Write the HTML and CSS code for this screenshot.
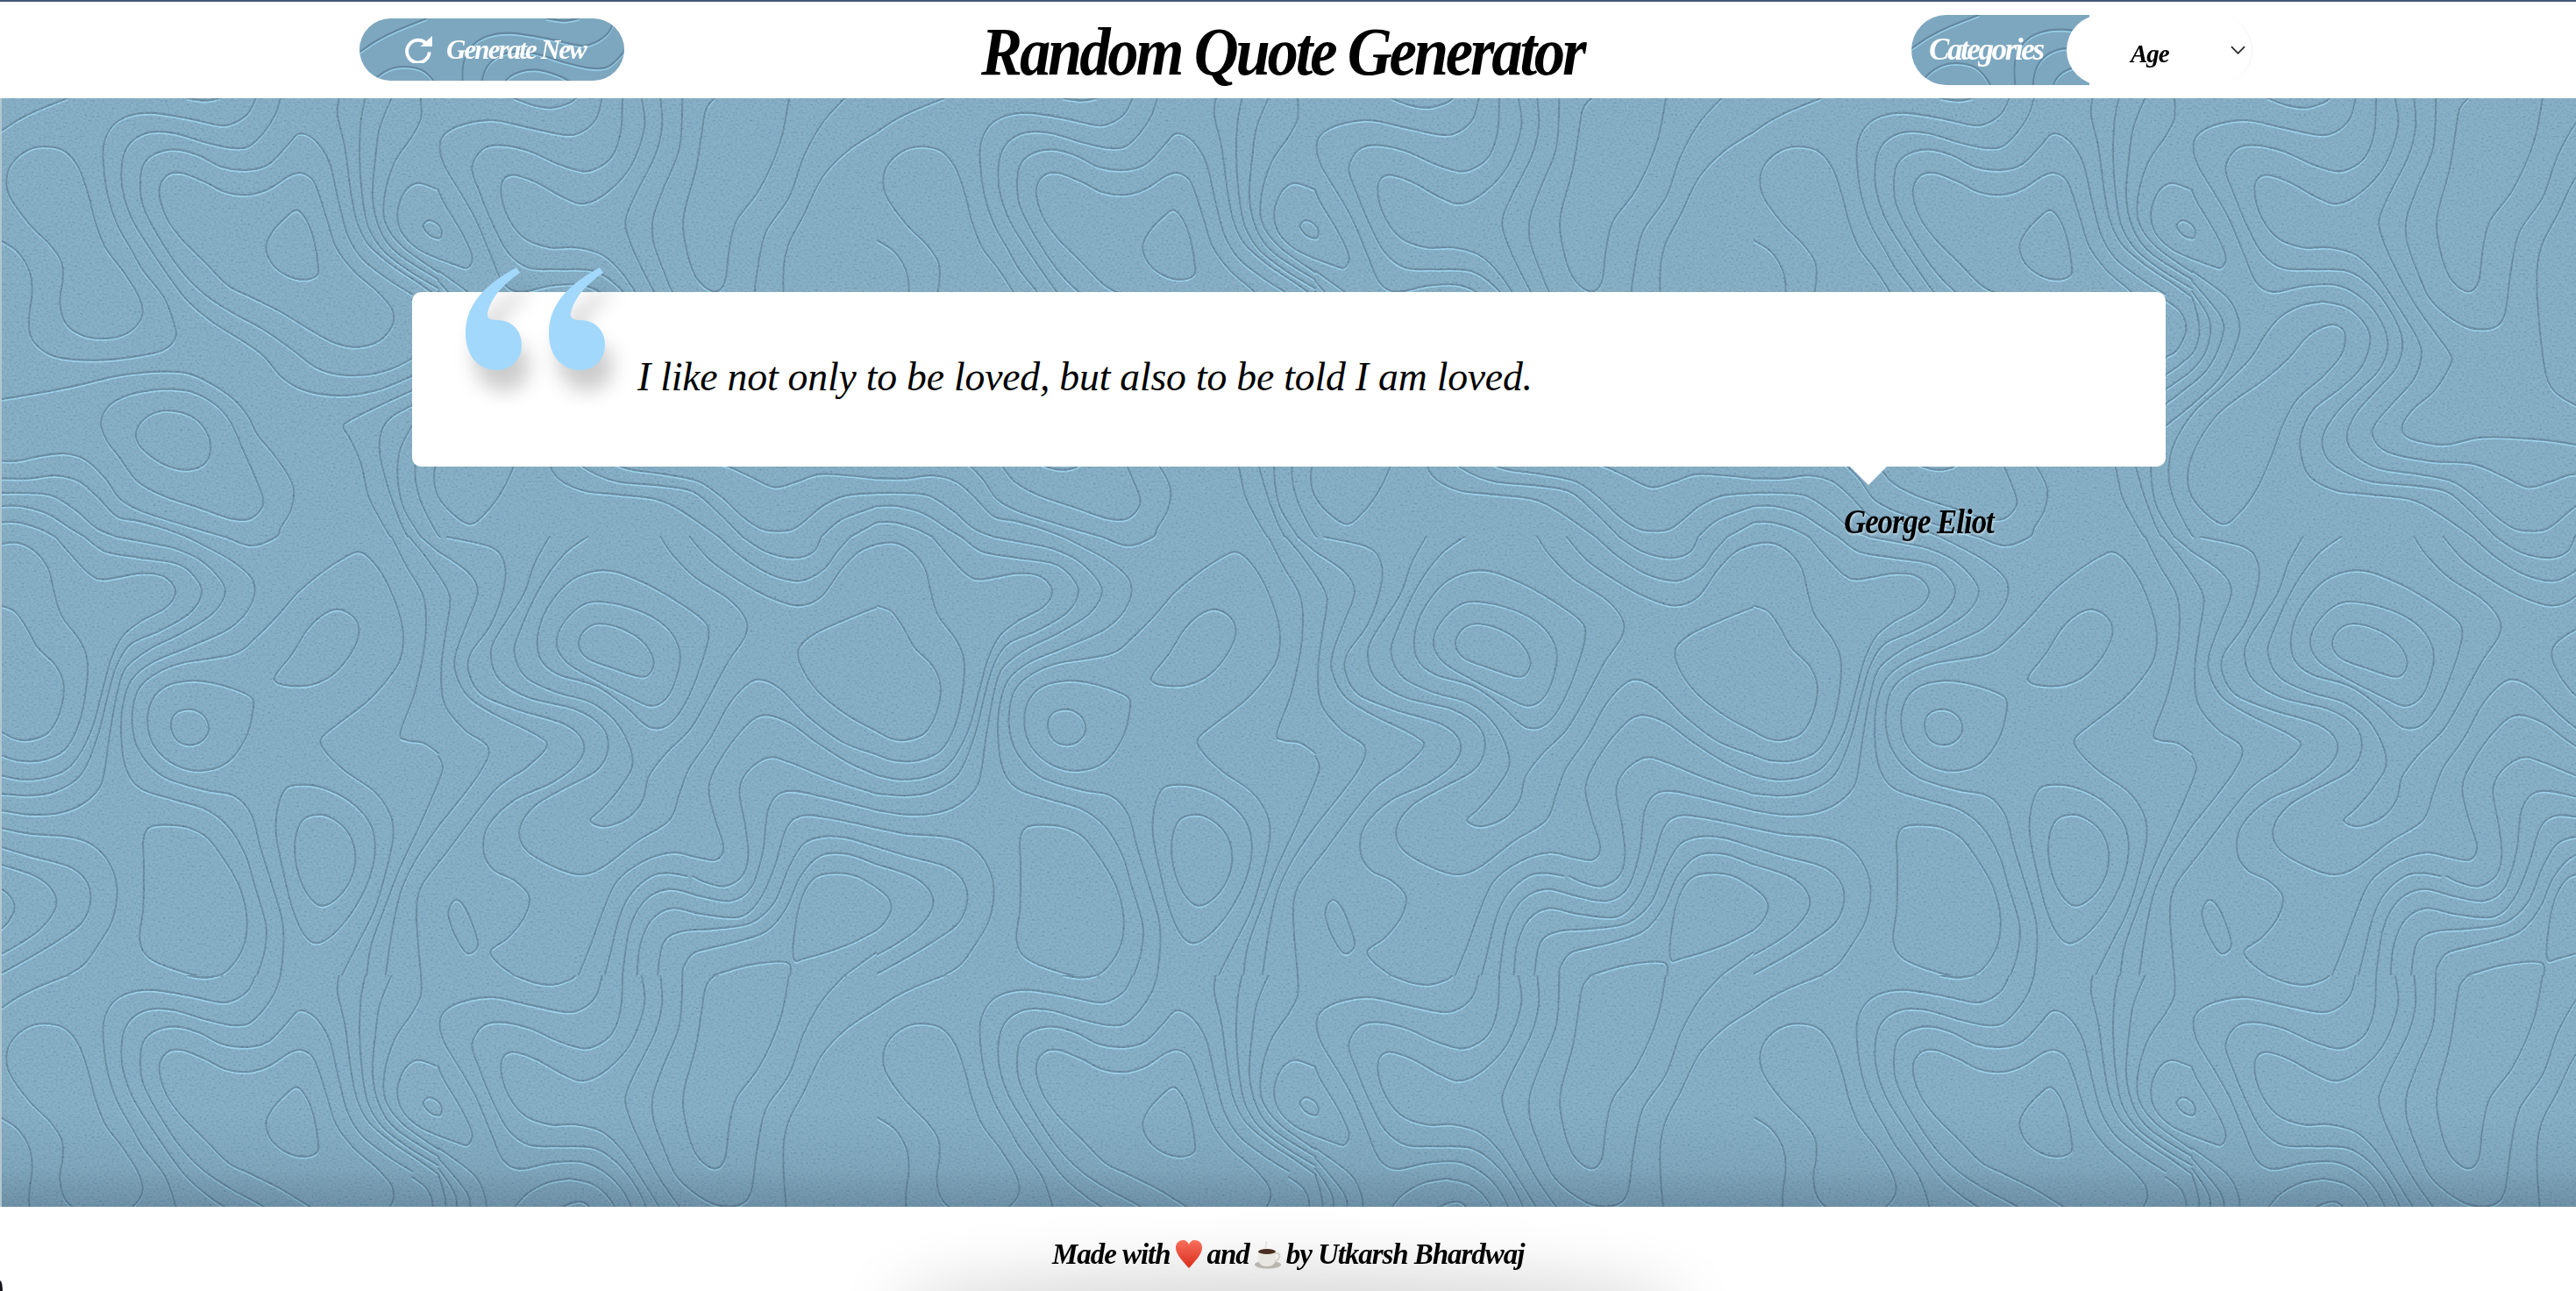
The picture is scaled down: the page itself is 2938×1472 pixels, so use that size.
FILE: index.html
```html
<!DOCTYPE html>
<html lang="en">
<head>
<meta charset="utf-8">
<title>Random Quote Generator</title>
<link rel="stylesheet" href="styles.css">
</head>
<body>
<header class="top">
  <div class="top-left">
    <button class="pill generate" type="button">
      <svg class="tex" aria-hidden="true"><rect width="100%" height="100%" fill="url(#paper)"/></svg>
      <svg class="redo" viewBox="0 0 34 32" aria-hidden="true"><path d="M25.5 8.5A13.2 13.2 0 1 0 29.6 19" fill="none" stroke="#fff" stroke-width="4"/><polygon points="19,12.5 33,12.5 33,0" fill="#fff"/></svg>
      <span class="pill-label">Generate New</span>
    </button>
  </div>
  <h1 class="title"><span class="title-text">Random Quote Generator</span></h1>
  <div class="top-right">
    <div class="pill categories">
      <svg class="tex" aria-hidden="true"><rect width="100%" height="100%" fill="url(#paper)"/></svg>
      <span class="cat-label">Categories</span>
    </div>
    <div class="select">
      <span class="select-value">Age</span>
      <svg class="chev" viewBox="0 0 18 10" aria-hidden="true"><polyline points="1,1 9,9 17,1" fill="none" stroke="#222" stroke-width="1.8"/></svg>
    </div>
  </div>
</header>

<main class="stage">
  <svg class="backdrop" aria-hidden="true">
    <defs>
      <filter id="soft" x="0" y="0" width="100%" height="100%"><feGaussianBlur stdDeviation="2.2"/></filter>
      <filter id="grain" x="0" y="0" width="100%" height="100%">
        <feTurbulence type="fractalNoise" baseFrequency="0.36 0.44" numOctaves="3" seed="7"/>
        <feColorMatrix type="matrix" values="1.6 0 0 0 -0.3  1.6 0 0 0 -0.3  1.6 0 0 0 -0.3  0 0 0 0 1"/>
      </filter>
      <pattern id="paper" patternUnits="userSpaceOnUse" width="1000" height="1000">
        <rect width="1000" height="1000" fill="#7da7bf"/>
        <g transform="scale(0.33333)" filter="url(#soft)">
          <path id="shine" class="line-shine" transform="translate(0 6)" d=""/>
          <path id="groove" class="line-groove" d=""/>
        </g>
      </pattern>
    </defs>
    <rect width="100%" height="100%" fill="url(#paper)"/>
    <rect class="grain" width="100%" height="100%" filter="url(#grain)"/>
  </svg>

  <section class="card">
    <svg class="mark" viewBox="0 0 160 118" aria-hidden="true">
      <path d="M58 0L62 6C45 18 30 32 25 52C24 58 28 60 36 60C53 60 64 72 64 88C64 105 52 117 36 117C14 117 0 100 0 75C0 40 25 18 58 0Z"/>
      <path d="M153 0L157 6C140 18 125 32 120 52C119 58 123 60 131 60C148 60 159 72 159 88C159 105 147 117 131 117C109 117 95 100 95 75C95 40 120 18 153 0Z"/>
    </svg>
    <p class="quote">I like not only to be loved, but also to be told I am loved.</p>
  </section>
  <p class="author"><span class="author-name">George Eliot</span></p>
</main>

<footer class="bottom">
  <p class="credit">Made with<svg class="emoji" viewBox="0 0 32 34" role="img" aria-label="heart"><defs><linearGradient id="heartfill" x1="0" y1="0" x2="0" y2="1"><stop offset="0" stop-color="#f8705c"/><stop offset="1" stop-color="#d92c1c"/></linearGradient></defs><path d="M16 33C8 24 1 17 1 9.500C1 4 5 1 9.500 1C12.500 1 15 3 16 6C17 3 19.500 1 22.500 1C27 1 31 4 31 9.500C31 17 24 24 16 33Z" fill="url(#heartfill)"/></svg>and<svg class="emoji" viewBox="0 0 32 34" role="img" aria-label="coffee"><ellipse cx="16" cy="29" rx="15" ry="4.500" fill="#b9b6ae"/><path d="M5 14H25V22C25 28 21 31 15 31C9 31 5 28 5 22Z" fill="#e9e7e1"/><path d="M25 16C31 15 31 23 24 25" fill="none" stroke="#d6d3cb" stroke-width="2"/><ellipse cx="15" cy="14" rx="10" ry="3" fill="#4a2e20"/><path d="M14 10C12 7 16 6 14 2" fill="none" stroke="#ddd" stroke-width="1.500"/></svg>by Utkarsh Bhardwaj</p>
</footer>
<script src="script.js"></script>
</body>
</html>
```

FILE: styles.css
```css
* { box-sizing: border-box; }
html, body { margin: 0; padding: 0; }
body {
  width: 100%;
  height: 100vh;
  display: flex;
  flex-direction: column;
  overflow: hidden;
  background: #fff;
  color: #000;
  font-family: "Liberation Serif", serif;
}

.top {
  flex: 0 0 112px;
  display: grid;
  grid-template-columns: 1119px 692px 1fr;
  align-items: start;
  border-top: 2px solid #44587a;
  background: #fff;
}
.top-left { padding: 19px 0 0 410px; }
.top-right { display: flex; padding: 15px 0 0 369px; }

.pill {
  position: relative;
  overflow: hidden;
  border: 0;
  padding: 0;
  color: #fff;
  font-family: "Liberation Serif", serif;
  font-weight: 700;
  font-style: italic;
}
.tex { position: absolute; inset: 0; width: 100%; height: 100%; }

.generate {
  width: 302px;
  height: 71px;
  display: flex;
  align-items: center;
  gap: 15px;
  padding-left: 51px;
  border-radius: 36px;
}
.redo { position: relative; width: 33px; height: 31px; flex: none; }
.pill-label {
  position: relative;
  font-size: 31px;
  letter-spacing: -1.9px;
  white-space: nowrap;
}

.title { margin: 0; padding-top: 15px; font-size: 79px; line-height: 84px; font-weight: 700; font-style: italic; }
.title-text {
  display: inline-block;
  white-space: nowrap;
  letter-spacing: -3.6px;
  transform: scaleX(.895);
  transform-origin: left center;
}

.categories {
  width: 203px;
  height: 80px;
  display: flex;
  align-items: center;
  padding-left: 20px;
  border-radius: 40px 0 0 40px;
}
.cat-label { position: relative; font-size: 35px; letter-spacing: -2.4px; }

.select {
  position: relative;
  width: 212px;
  height: 80px;
  margin-left: -26px;
  display: flex;
  align-items: center;
  padding-left: 73px;
  background: #fff;
  border-radius: 40px;
  border-right: 1px solid #f1f1f1;
}
.select-value { font-size: 29px; font-weight: 700; font-style: italic; letter-spacing: -1px; padding-top: 9px; }
.chev { position: absolute; left: 187px; top: 35px; width: 17px; height: 10px; }

.stage {
  position: relative;
  flex: 1 1 auto;
  overflow: hidden;
  padding-top: 221px;
}
.stage::before {
  content: "";
  position: absolute;
  left: 0; top: 0; bottom: 0;
  width: 2px;
  background: #b3c5d0;
  z-index: 1;
}
.stage::after {
  content: "";
  position: absolute;
  left: 0; right: 0; bottom: 0;
  height: 110px;
  background: linear-gradient(to bottom, rgba(30,50,70,0), rgba(30,50,70,.07) 60%, rgba(30,50,70,.24));
}
.backdrop { position: absolute; inset: 0; width: 100%; height: 100%; }
.grain { mix-blend-mode: soft-light; opacity: .3; }
.line-groove { fill: none; stroke: #63879e; stroke-width: 6.5; stroke-linecap: round; stroke-linejoin: round; }
.line-shine { fill: none; stroke: #98cfe9; stroke-width: 5; stroke-linecap: round; stroke-linejoin: round; }

.card {
  position: relative;
  width: 2000px;
  height: 199px;
  margin-left: 470px;
  display: flex;
  align-items: center;
  padding-left: 257px;
  background: #fff;
  border-radius: 10px;
}
.card::after {
  content: "";
  position: absolute;
  left: 1640px;
  top: 199px;
  border-style: solid;
  border-width: 21px 21px 0;
  border-color: #fff transparent transparent;
}
.mark {
  position: absolute;
  left: 61px;
  top: -28px;
  width: 160px;
  height: 118px;
  fill: #a2d8fb;
  overflow: visible;
  filter: drop-shadow(9px 24px 11px rgba(0,0,0,.2));
}
.quote {
  margin: 0 0 6px;
  font-size: 45.7px;
  font-style: italic;
  letter-spacing: -.2px;
  white-space: nowrap;
  color: #000;
}

.author {
  position: relative;
  margin: 37px 0 0 2103px;
  font-size: 41px;
  line-height: 50px;
  font-weight: 700;
  font-style: italic;
  letter-spacing: -1.2px;
  white-space: nowrap;
  text-shadow: 1px 2px 3px rgba(215,232,242,.8);
}
.author-name { display: inline-block; transform: scaleX(.85); transform-origin: left center; }

.bottom {
  position: relative;
  flex: 0 0 96px;
  overflow: hidden;
  background: #fff;
}
.bottom::before {
  content: "";
  position: absolute;
  left: 1040px;
  right: 1040px;
  bottom: -42px;
  height: 40px;
  border-radius: 50%;
  box-shadow: 0 0 70px 28px rgba(0,0,0,.15);
}
.bottom::after {
  content: "";
  position: absolute;
  left: 0;
  bottom: 0;
  width: 3px;
  height: 12px;
  background: #16161c;
  border-top-right-radius: 3px 12px;
}
.credit {
  position: relative;
  margin: 0;
  padding-top: 37px;
  padding-left: 1200px;
  display: flex;
  align-items: center;
  font-size: 33px;
  line-height: 34px;
  font-weight: 700;
  font-style: italic;
  letter-spacing: -1.05px;
  white-space: nowrap;
}
.emoji { width: 32px; height: 34px; flex: none; margin: 0 5px; }
```

FILE: script.js
```js
// Contour lines of the paper backdrop: lists of points, smoothed into curves.
// Each group has an offset; points are in units of a third of a pixel.
var groups = [
  { at: [0, 0], open: [
    "0,115 60,75 130,40 230,0",
    "640,0 700,8 750,0",
    "875,0 850,50 800,85 750,92 650,70 520,50 440,60 385,95 355,160 355,240 370,340 400,430 450,520 490,590 560,680 595,770 600,820 560,860 480,880 350,895 220,890 150,865 105,815 100,750 110,660 100,590 60,525 0,485",
    "960,0 940,60 900,120 850,165 790,170 700,150 600,120 520,115 460,140 425,190 415,270 425,340 460,430 530,540 630,680 720,760 830,830 900,880 960,950 1020,990 1100,1012 1200,1015 1300,995 1410,950",
    "1410,670 1330,620 1240,550 1190,470 1160,360 1130,230 1100,170 1060,130 1020,122 980,165 920,225 850,245 760,235 680,195 600,175 530,190 490,230 480,300 490,370 540,470 620,590 700,670 790,730 900,790 1000,860 1080,920 1160,945 1260,945 1340,925 1410,890",
    "1160,0 1155,60 1180,170 1200,320 1220,420 1260,500 1340,570 1430,630 1500,680",
    "1250,0 1235,80 1230,200 1240,340 1260,440 1310,520 1400,590 1500,650",
    "1340,0 1300,100 1285,200 1275,340 1300,450 1360,530 1500,620",
    "1440,0 1440,70 1410,130 1350,220 1315,340 1320,430 1380,510 1500,595",
    "1500,312 1430,290 1385,320 1360,390 1375,460 1430,515 1500,548",
    "0,1030 120,1010 250,985 400,950 530,935 640,940 720,975 800,1030 850,1090 880,1150 930,1210 980,1280 1005,1340 995,1410 960,1470 945,1500 860,1530 770,1500 700,1480 600,1450 480,1410 410,1370 360,1300 290,1235 220,1215 130,1225 60,1240 0,1240",
    "0,1300 100,1300 190,1290 270,1310 330,1360 400,1430 470,1445 560,1470 640,1500",
    "0,1350 100,1350 180,1360 260,1410 330,1470 400,1500",
    "0,1395 70,1395 160,1420 240,1470 290,1500",
    "0,1450 60,1450 130,1470 190,1500",
    "1410,1000 1300,1050 1200,1100 1175,1125 1200,1170 1235,1250 1260,1360 1300,1440 1335,1500",
    "1410,1050 1340,1090 1305,1140 1300,1220 1330,1340 1370,1450 1395,1500"
  ], closed: [
    "150,165 90,180 40,225 22,280 35,340 100,430 170,500 210,560 215,620 205,700 225,770 280,810 350,822 420,810 470,775 488,730 470,670 420,590 360,510 325,420 305,340 270,240 220,180",
    "545,320 570,265 620,255 700,285 770,320 850,330 920,310 990,265 1030,255 1070,280 1095,340 1120,420 1150,510 1210,590 1290,660 1340,720 1345,770 1310,820 1260,845 1200,850 1130,830 1050,785 960,730 860,680 780,640 700,560 620,480 570,410",
    "1015,382 975,410 930,460 910,510 930,565 980,605 1040,620 1085,605 1088,570 1075,490 1050,420",
    "1465,418 1448,438 1470,468 1505,478 1510,450 1490,425",
    "520,998 440,1015 375,1050 345,1110 365,1170 410,1230 470,1310 560,1360 680,1400 780,1435 850,1440 890,1410 900,1370 870,1290 830,1200 790,1110 740,1050 660,1005 590,995",
    "570,1068 510,1085 470,1130 470,1175 510,1220 580,1260 650,1270 705,1245 720,1190 700,1130 650,1085"
  ]},
  { at: [1410, 0], open: [
    "350,0 420,25 480,32 540,15 560,0",
    "650,0 630,70 580,115 520,125 400,100 280,75 190,85 120,115 95,160 110,230 170,330 220,420 270,540 310,630 370,662 480,640 590,640 680,690 740,770 760,850 730,930 660,1000 590,1070 540,1150 545,1220 600,1270 700,1310 850,1325 960,1345 1040,1410 1130,1500",
    "720,0 715,110 690,190 650,230 590,250 500,225 400,180 300,160 240,175 205,240 230,320 280,440 330,530 400,580 500,585 620,590 700,640 770,730 810,830 790,920 720,1000 650,1080 620,1160 650,1220 730,1265 860,1285 980,1310 1060,1365 1130,1430 1190,1470 1240,1480 1310,1470 1404,1395 1480,1360 1590,1350",
    "785,0 795,100 750,230 670,320 590,360 520,340 420,285 340,262 305,300 320,390 380,475 470,510 560,510 650,535 720,600 800,720 860,820 875,880 850,960 780,1040 720,1110 710,1160 760,1210 900,1240 1050,1250 1150,1290 1240,1330 1320,1310 1404,1285 1590,1300",
    "850,0 855,100 830,200 760,340 730,420 745,490 790,590 850,700 920,800 970,870 975,910 920,1000 850,1060 810,1120 830,1160 950,1185 1080,1160 1250,1165 1404,1185 1590,1240",
    "925,0 915,170 860,310 825,410 825,490 860,590 900,680 960,740 1040,785 1120,785 1160,740 1180,600 1210,460 1290,340 1340,200 1404,85 1480,0",
    "1035,0 1005,40 990,130 970,250 930,400 935,500 970,610 1030,660 1070,630 1085,520 1110,420 1190,310 1260,150 1290,0",
    "1590,115 1490,180 1404,270 1340,400 1285,510 1270,640 1290,880 1320,990 1404,1050 1500,1090 1590,1030",
    "90,315 110,360 170,460 205,540 190,580 150,570 90,548",
    "0,690 50,730 70,790 40,860 0,885",
    "90,680 115,780 100,860 50,910 0,945",
    "90,660 150,760 140,860 90,930 0,995",
    "90,625 190,750 190,830 140,930 60,1000 0,1045",
    "90,590 210,680 250,760 245,830 190,950 100,1040 0,1120",
    "0,1120 -40,1200 -50,1290 -30,1400 30,1500",
    "540,695 460,710 390,750 340,810 290,890 200,980 100,1070 30,1180 10,1280 30,1380 80,1480 95,1500",
    "540,695 620,715 680,770 700,830 670,920 600,990 510,1060 470,1130 460,1200 490,1290 580,1340 700,1355 830,1370 920,1410 1050,1500",
    "1400,1500 1470,1440 1590,1395",
    "1500,1500 1590,1450"
  ], closed: [
    "560,775 490,810 420,890 340,960 240,1030 170,1090 100,1200 75,1300 100,1380 190,1455 250,1420 310,1340 360,1230 400,1120 450,1030 540,950 600,880 615,820 600,785"
  ]},
  { at: [0, 1500], open: [
    "190,0 250,70 310,130 360,145 480,125 560,135 600,185 570,240 480,290 420,340 380,420 350,530 310,670 245,780 170,820 80,830 0,815",
    "290,0 360,50 470,70 600,90 660,130 690,190 650,260 550,320 450,365 400,440 370,540 335,680 280,810 190,870 100,885 0,878",
    "400,0 480,15 600,40 700,90 770,180 730,260 620,330 510,385 430,450 400,540 375,680 358,800 340,860 280,915 200,945 100,950 0,935",
    "640,0 790,80 865,150 860,230 790,310 650,375 520,430 450,490 420,580 415,690 430,790 480,860 600,900 700,930 780,990 840,1090 870,1190 910,1330 905,1420 880,1500",
    "1170,1500 1220,1400 1280,1280 1320,1150 1345,1030 1335,950 1280,870 1180,800 1110,730 1100,690 1150,645 1260,560 1340,470 1375,400 1375,300 1330,170 1280,90 1232,52 1180,70 1090,130 1020,190 950,270 880,340 800,400 620,432 530,470 470,530 452,640 480,740 560,820 700,865 800,885 860,950 890,1060 930,1190 965,1310 970,1400 960,1500",
    "1340,0 1390,100 1450,210 1455,350 1420,530 1370,670 1390,695 1450,705 1500,740",
    "1400,0 1450,60 1500,130",
    "1440,0 1500,50",
    "0,25 60,20 120,50 165,110 185,190 210,270 270,350 298,420 295,520 270,640 220,730 140,765 60,765 0,745",
    "0,235 50,255 90,310 130,380 190,440 218,510 205,600 165,670 100,695 50,690 0,665",
    "0,995 100,1015 230,1025 310,1050 370,1110 400,1200 385,1310 340,1390 290,1460 230,1500",
    "0,1060 100,1090 230,1125 290,1170 310,1240 280,1320 200,1380 100,1440 0,1495",
    "0,1120 120,1160 180,1210 190,1270 140,1340 70,1390 0,1430",
    "0,1200 35,1230 50,1270 30,1315 0,1345",
    "1500,840 1440,980 1370,1130 1320,1260 1270,1400 1255,1500",
    "1500,990 1420,1110 1370,1220 1340,1360 1320,1500",
    "1500,1115 1440,1200 1425,1300 1440,1500"
  ], closed: [
    "650,492 570,510 520,560 505,640 530,720 600,780 690,800 780,770 840,690 865,600 860,550 800,520 720,498",
    "648,590 600,605 585,650 605,695 650,712 695,695 715,655 695,610",
    "1155,248 1100,270 1050,320 1000,400 945,470 945,497 1000,510 1070,505 1140,470 1200,400 1228,330 1210,275",
    "1040,848 980,860 950,930 945,1020 970,1150 1000,1270 1040,1360 1085,1390 1150,1350 1220,1260 1270,1150 1283,1050 1260,970 1190,900 1110,860",
    "1090,950 1035,970 1010,1040 1015,1130 1050,1220 1100,1262 1160,1230 1205,1160 1215,1080 1190,1010 1140,965",
    "560,985 510,995 490,1040 492,1130 490,1270 478,1380 510,1440 600,1480 700,1505 770,1490 830,1410 845,1310 820,1200 770,1110 710,1030 640,993"
  ]},
  { at: [1500, 1500], open: [
    "0,130 40,210 25,330 10,450 20,570 90,660 170,720 140,810 0,990",
    "0,50 100,120 135,190 100,290 60,400 60,470 105,550 200,610 340,680 370,720 300,790 190,870 20,1090 0,1110",
    "0,750 15,790 0,840",
    "30,0 180,35 225,90 225,170 180,300 110,400 105,470 150,540 270,590 430,640 495,700 480,770 390,840 260,900 170,990 155,1080 190,1140 260,1175 310,1230 295,1300 240,1370 180,1415 200,1455 260,1500",
    "380,0 330,90 290,200 200,340 180,410 210,490 310,550 470,590 560,650 580,730 540,800 430,860 330,920 278,1000 300,1070 400,1130 490,1155 570,1125 680,1040 790,970 825,880 860,790 930,690 990,580 1050,510 1100,488 1170,520 1260,610 1380,700 1500,745",
    "510,0 430,60 350,170 280,320 260,400 300,480 400,530 530,570 620,650 665,770 620,860 560,930 520,970 570,990 650,960 700,900 720,820 780,740 860,660 920,560 990,430 1050,340 1050,280 990,210 880,140 800,60 760,0",
    "860,0 930,80 1030,150 1130,205 1230,235 1310,205 1380,110 1440,50 1500,25",
    "960,0 1040,70 1140,130 1240,150 1320,110 1365,50 1410,0",
    "1040,0 1120,50 1220,72 1285,50 1310,0",
    "1500,240 1400,280 1290,330 1235,380 1240,440 1300,530 1400,610 1500,665",
    "1500,815 1400,770 1290,700 1200,635 1110,610 1040,660 960,770 925,860 945,960 975,1060 950,1105 880,1095 800,1080 700,1110 610,1180 560,1290 520,1400 480,1500",
    "1500,878 1350,830 1200,770 1130,755 1060,800 1030,870 1050,990 1060,1090 1040,1160 980,1195 910,1180 870,1160",
    "850,1160 790,1150 730,1160 660,1220 620,1300 590,1420 570,1500",
    "1500,935 1320,890 1190,870 1130,930 1110,1080 1070,1200 1000,1245 900,1230 800,1205 730,1225 680,1280 650,1360 630,1500",
    "1500,995 1330,960 1240,955 1190,1000 1150,1130 1100,1240 1030,1300 900,1290 800,1270 730,1310 690,1400 680,1500",
    "1500,1060 1400,1030 1320,1025 1250,1050 1200,1130 1150,1250 1070,1320 950,1340 830,1350 770,1390 750,1500",
    "1500,1120 1400,1085 1310,1090 1240,1160 1190,1270 1120,1350 1000,1390 880,1420 840,1470 835,1500",
    "1500,1200 1430,1160 1350,1150 1290,1165 1250,1220 1225,1310 1215,1440 1260,1440 1400,1395 1500,1345",
    "940,1500 1060,1465 1190,1455 1205,1500",
    "1390,1500 1500,1420"
  ], closed: [
    "600,118 520,120 440,160 370,250 340,340 350,420 410,470 540,510 640,580 720,650 790,640 850,560 905,420 925,330 900,280 800,210 700,155",
    "560,222 490,235 425,300 405,370 440,430 540,490 650,545 730,578 790,540 825,440 820,370 770,300 680,250",
    "550,297 500,320 480,370 510,415 600,450 690,478 725,465 735,420 700,360 630,315",
    "60,1242 40,1265 35,1300 60,1370 100,1425 135,1395 110,1310 85,1260"
  ]}
];

function parse(list, at) {
  return list.trim().split(/\s+/).map(function (pair) {
    var p = pair.split(",");
    return [Number(p[0]) + at[0], Number(p[1]) + at[1]];
  });
}

function curve(pts, closed) {
  var n = pts.length;
  function get(i) {
    return closed ? pts[(i + n) % n] : pts[Math.max(0, Math.min(n - 1, i))];
  }
  var d = "M" + pts[0][0] + " " + pts[0][1];
  var last = closed ? n : n - 1;
  for (var i = 0; i < last; i++) {
    var a = get(i - 1), b = get(i), c = get(i + 1), e = get(i + 2);
    d += "C" + (b[0] + (c[0] - a[0]) / 6).toFixed(1) + " " + (b[1] + (c[1] - a[1]) / 6).toFixed(1) +
      " " + (c[0] - (e[0] - b[0]) / 6).toFixed(1) + " " + (c[1] - (e[1] - b[1]) / 6).toFixed(1) +
      " " + c[0] + " " + c[1];
  }
  return d + (closed ? "Z" : "");
}

var all = "";
groups.forEach(function (g) {
  g.open.forEach(function (l) { all += curve(parse(l, g.at), false); });
  g.closed.forEach(function (l) { all += curve(parse(l, g.at), true); });
});
document.getElementById("groove").setAttribute("d", all);
document.getElementById("shine").setAttribute("d", all);
```
